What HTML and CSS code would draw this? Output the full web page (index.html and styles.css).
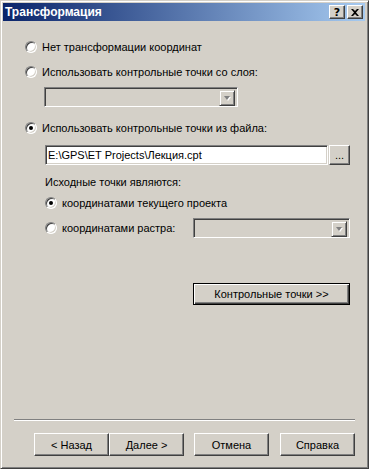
FILE: index.html
```html
<!DOCTYPE html>
<html lang="ru">
<head>
  <meta charset="UTF-8" />
  <title>Трансформация</title>
  <link rel="stylesheet" href="styles.css">
</head>
<body>

  <div class="window">
    <div class="titlebar">
      <span class="title">Трансформация</span>
      <span class="cap-btn help">?</span>
      <span class="cap-btn close">
        <svg width="8" height="7" viewBox="0 0 8 7">
          <path d="M0 0h2l2 2 2-2h2L5 3.5 8 7H6L4 5 2 7H0l3-3.5z" fill="#000"/>
        </svg>
      </span>
    </div>

    <div class="content">
      <div class="radio row1"><span class="dot"></span>Нет трансформации координат</div>
      <div class="radio row2"><span class="dot"></span>Использовать контрольные точки со слоя:</div>
      <div class="combo sunken combo-layer"><span class="drop"><span class="arrow"></span></span></div>

      <div class="radio row3"><span class="dot checked"></span>Использовать контрольные точки из файла:</div>
      <div class="file-row">
        <div class="input sunken">E:\GPS\ET Projects\Лекция.cpt</div>
        <span class="btn browse">...</span>
      </div>

      <div class="caption">Исходные точки являются:</div>
      <div class="radio row4"><span class="dot checked"></span>координатами текущего проекта</div>
      <div class="raster-row">
        <div class="radio raster-label"><span class="dot"></span>координатами растра:</div>
        <div class="combo sunken combo-raster"><span class="drop"><span class="arrow"></span></span></div>
      </div>

      <span class="btn default points">Контрольные точки &gt;&gt;</span>
    </div>

    <div class="footer">
      <div class="separator"></div>
      <div class="buttons">
        <span class="btn">&lt; Назад</span>
        <span class="btn">Далее &gt;</span>
        <span class="btn cancel">Отмена</span>
        <span class="btn help-btn">Справка</span>
      </div>
    </div>
  </div>

</body>
</html>
```

FILE: styles.css
```css
html, body {
  margin: 0;
  padding: 0;
  background-color: #d4d0c8;
  font-family: "Liberation Sans", Arial, sans-serif;
  font-size: 11px;
  color: #000;
}

.window {
  box-sizing: border-box;
  width: 369px;
  height: 469px;
  display: flex;
  flex-direction: column;
  background-color: #d4d0c8;
  border: 1px solid;
  border-color: #d4d0c8 #404040 #404040 #d4d0c8;
  box-shadow: inset 1px 1px #fff, inset -1px -1px #808080;
  padding: 2px 3px 3px 2px;
}

.titlebar {
  height: 18px;
  display: flex;
  align-items: center;
  background: linear-gradient(90deg, #0a246a, #a6caf0);
  padding: 0 2px 0 2px;
}

.title {
  flex: 1;
  color: #fff;
  font-family: "Liberation Sans", Arial, sans-serif;
  font-weight: bold;
  font-size: 12px;
}

.cap-btn {
  box-sizing: border-box;
  width: 16px;
  height: 14px;
  display: flex;
  align-items: center;
  justify-content: center;
  background-color: #d4d0c8;
  border: 1px solid;
  border-color: #fff #404040 #404040 #fff;
  box-shadow: inset -1px -1px #808080;
  font-family: "DejaVu Sans", sans-serif;
  font-weight: bold;
  font-size: 11px;
  line-height: 1;
}

.close {
  margin-left: 2px;
}

.content {
  display: flex;
  flex-direction: column;
  align-items: flex-start;
  padding: 18px 0 0 22px;
}

.radio {
  height: 16px;
  display: flex;
  align-items: center;
  white-space: nowrap;
}

.dot {
  box-sizing: border-box;
  width: 12px;
  height: 12px;
  margin-right: 5px;
  border-radius: 50%;
  background-color: #fff;
  border: 1px solid;
  border-color: #808080 #fff #fff #808080;
  box-shadow: inset 1px 1px #404040, inset -1px -1px #d4d0c8;
  display: flex;
  align-items: center;
  justify-content: center;
}

.dot.checked::after {
  content: "";
  width: 4px;
  height: 4px;
  border-radius: 50%;
  background-color: #000;
}

.row2 { margin-top: 9px; }
.row3 { margin-top: 13px; }
.row4 { margin-top: 5px; margin-left: 20px; }

.sunken {
  box-sizing: border-box;
  border: 1px solid;
  border-color: #808080 #fff #fff #808080;
  box-shadow: inset 1px 1px #404040, inset -1px -1px #d4d0c8;
}

.combo {
  height: 20px;
  display: flex;
  justify-content: flex-end;
  padding: 2px;
}

.combo-layer {
  width: 194px;
  margin: 7px 0 0 19px;
}

.drop {
  box-sizing: border-box;
  width: 16px;
  height: 16px;
  display: flex;
  align-items: center;
  justify-content: center;
  background-color: #d4d0c8;
  border: 1px solid;
  border-color: #d4d0c8 #404040 #404040 #d4d0c8;
  box-shadow: inset 1px 1px #fff, inset -1px -1px #808080;
}

.arrow {
  width: 0;
  height: 0;
  border-left: 3.5px solid transparent;
  border-right: 3.5px solid transparent;
  border-top: 4px solid #808080;
  filter: drop-shadow(1px 1px 0 #fff);
}

.file-row {
  display: flex;
  gap: 1px;
  margin: 9px 0 0 20px;
}

.input {
  width: 283px;
  height: 20px;
  background-color: #fff;
  padding: 0 2px;
  display: flex;
  align-items: center;
  white-space: nowrap;
}

.btn {
  box-sizing: border-box;
  width: 75px;
  height: 23px;
  display: flex;
  align-items: center;
  justify-content: center;
  background-color: #d4d0c8;
  border: 1px solid;
  border-color: #fff #404040 #404040 #fff;
  box-shadow: inset -1px -1px #808080, inset 1px 1px #d4d0c8;
  white-space: nowrap;
}

.browse {
  width: 21px;
  height: 20px;
  align-items: flex-end;
  padding-bottom: 3px;
}

.caption {
  height: 16px;
  line-height: 16px;
  margin: 9px 0 0 20px;
}

.raster-row {
  display: flex;
  align-items: center;
  margin: 7px 0 0 20px;
}

.raster-label {
  width: 148px;
}

.combo-raster {
  width: 157px;
}

.points {
  width: 157px;
  height: 22px;
  margin: 45px 0 0 168px;
}

.default {
  border: 1px solid #000;
  box-shadow: inset 1px 1px #fff, inset -1px -1px #404040, inset -2px -2px #808080;
}

.footer {
  margin-top: auto;
  padding-bottom: 9px;
}

.separator {
  height: 0;
  margin: 0 10px 0 11px;
  border-top: 1px solid #808080;
  border-bottom: 1px solid #fff;
}

.buttons {
  display: flex;
  justify-content: flex-end;
  margin-top: 12px;
  padding-right: 10px;
}

.cancel { margin-left: 10px; }
.help-btn { margin-left: 11px; }
```
